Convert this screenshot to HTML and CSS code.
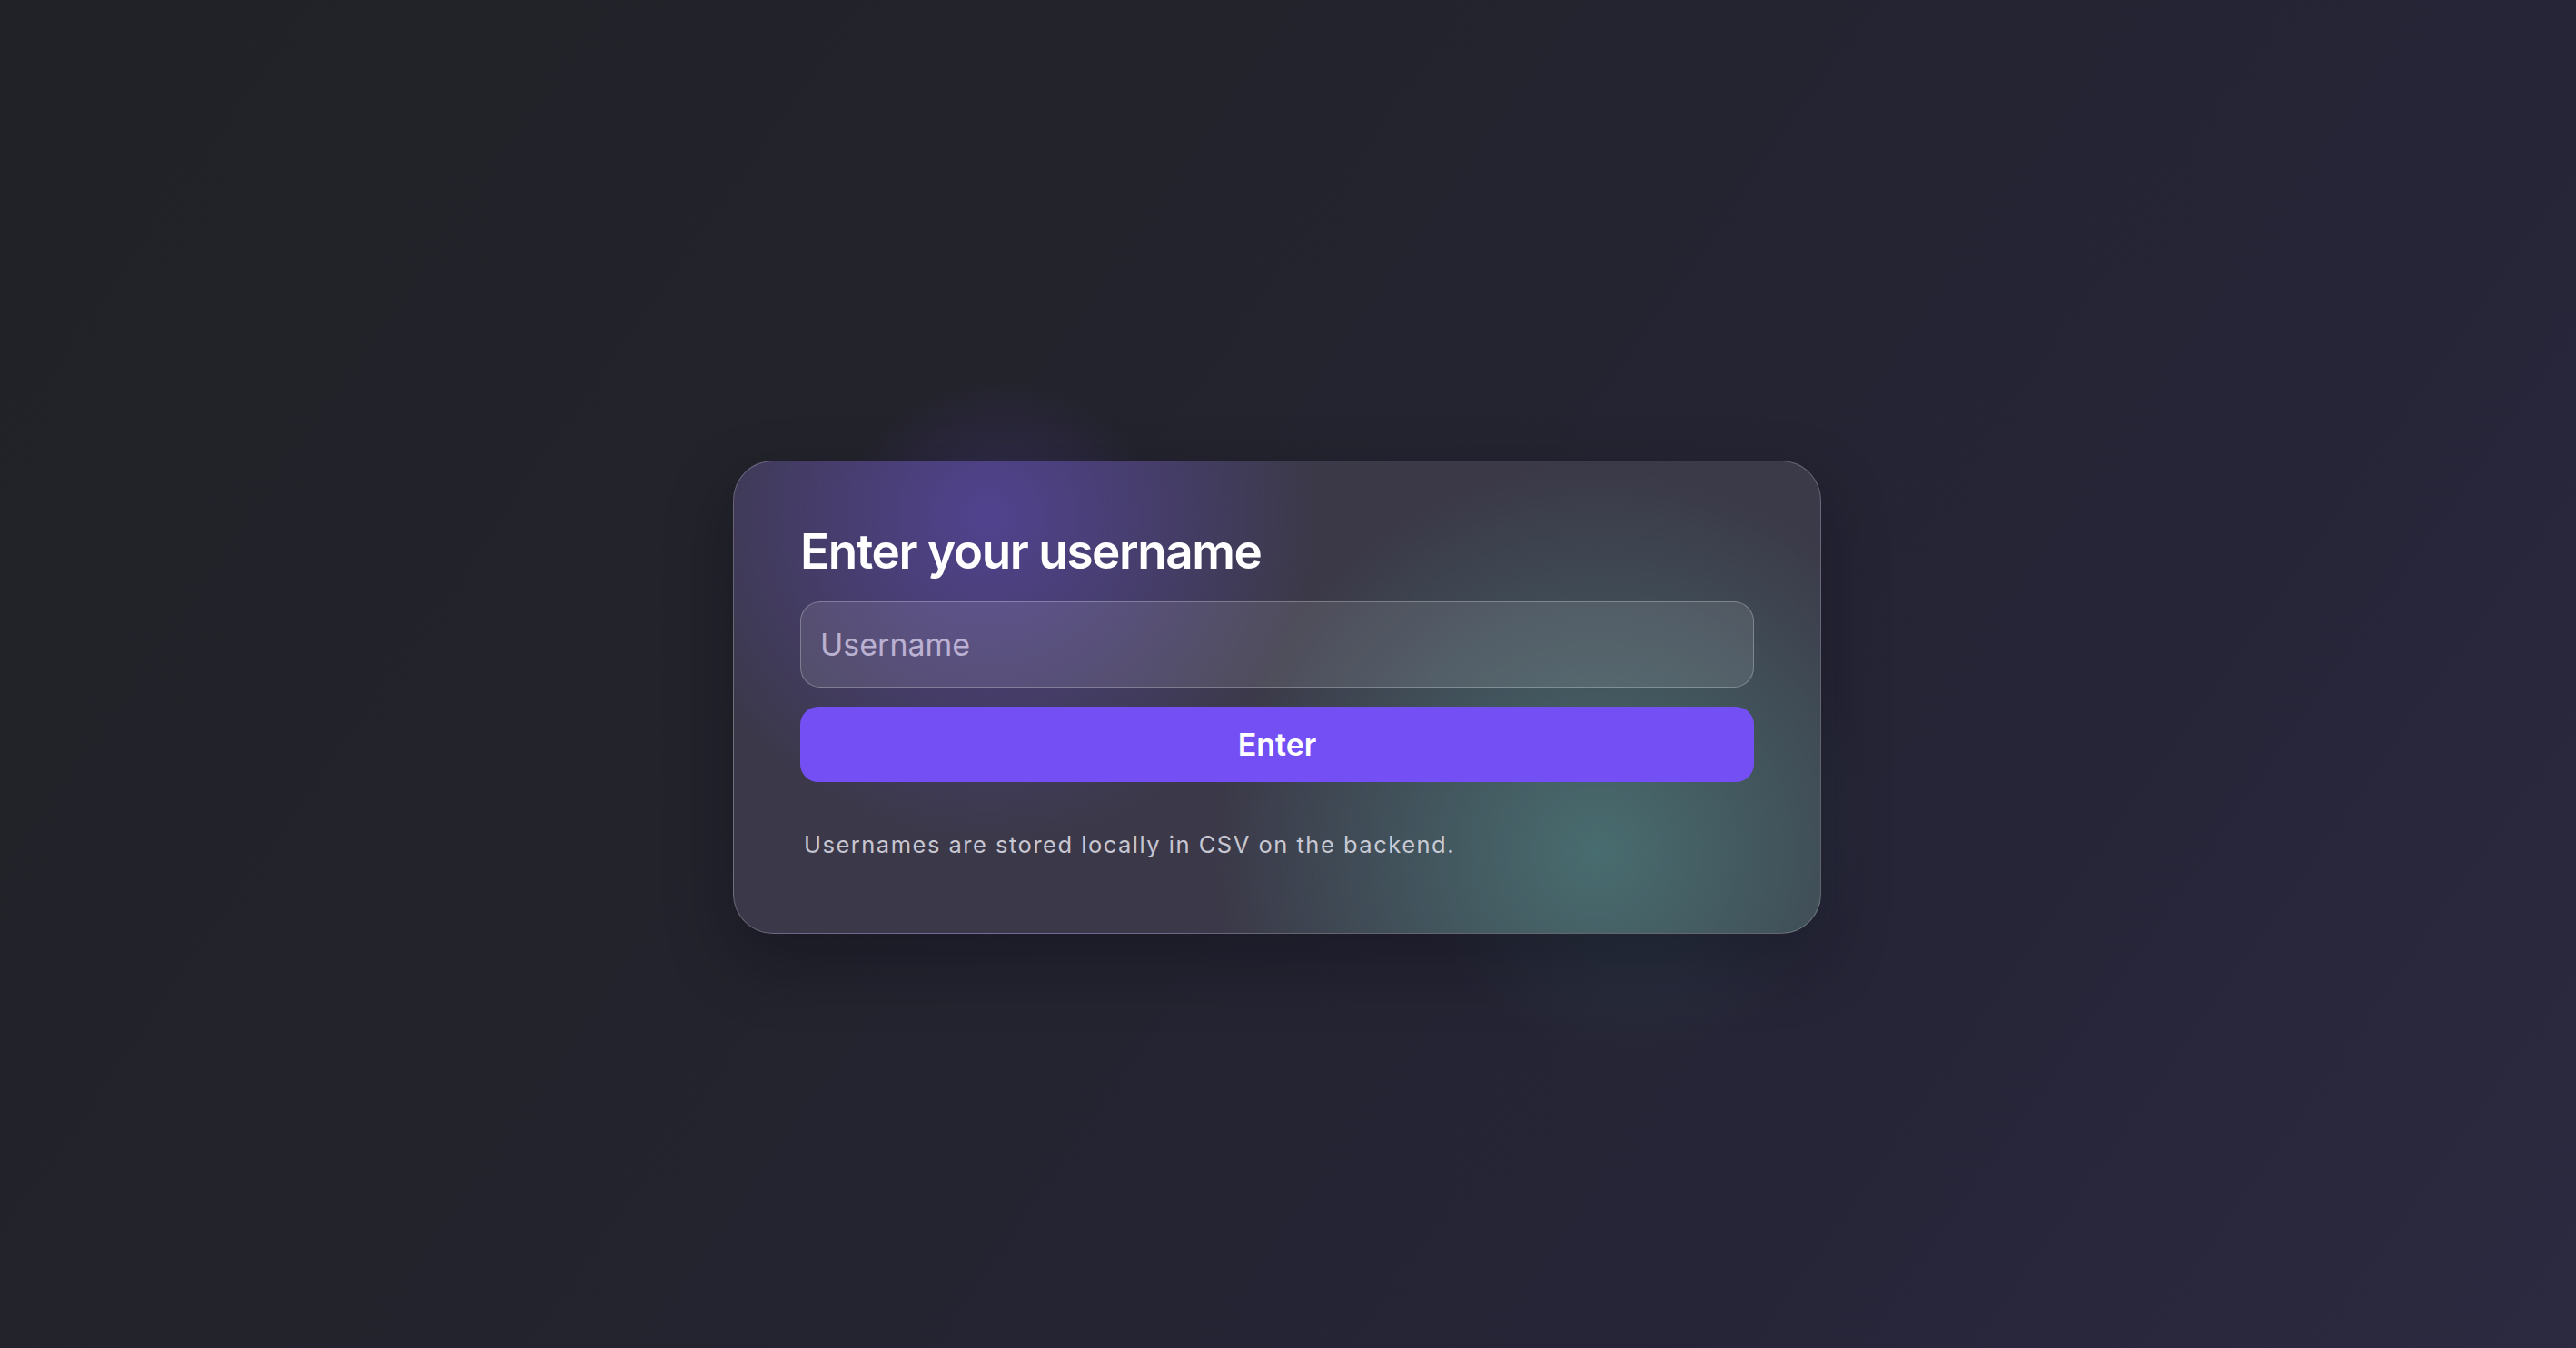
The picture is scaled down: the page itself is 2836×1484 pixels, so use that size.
FILE: index.html
```html
<!DOCTYPE html>
<html lang="en">
<head>
<meta charset="utf-8">
<title>Enter your username</title>
<link rel="stylesheet" href="styles.css">
</head>
<body>
<main class="page">
  <form class="card" onsubmit="return false;">
    <h1 class="title">Enter your username</h1>
    <input class="field" type="text" placeholder="Username">
    <button class="btn" type="submit">Enter</button>
    <p class="note">Usernames are stored locally in CSV on the backend.</p>
  </form>
</main>
</body>
</html>
```

FILE: styles.css
```css
html, body {
  margin: 0;
  padding: 0;
}

body {
  font-family: Inter, "Noto Sans", "Liberation Sans", sans-serif;
  background: #23232b;
}

.page {
  box-sizing: border-box;
  min-height: 100vh;
  padding: 50px 24px 0 0;
  display: flex;
  align-items: center;
  justify-content: center;
  background:
    radial-gradient(circle 190px at 1100px 610px, rgba(112, 80, 220, 0.28), rgba(112, 80, 220, 0) 100%),
    radial-gradient(circle 260px at 1800px 900px, rgba(70, 140, 135, 0.24), rgba(70, 140, 135, 0) 100%),
    linear-gradient(125deg, #212227 0%, #23232c 35%, #262538 75%, #2c2a40 100%);
}

.card {
  box-sizing: border-box;
  width: 1198px;
  height: 521px;
  padding: 67px 73px 0 73px;
  border: 1px solid rgba(255, 255, 255, 0.22);
  border-radius: 44px;
  display: flex;
  flex-direction: column;
  background:
    radial-gradient(circle 360px at 280px 60px, rgba(90, 70, 170, 0.72), rgba(90, 70, 170, 0) 100%),
    radial-gradient(circle 420px at 950px 430px, rgba(75, 120, 120, 0.82), rgba(75, 120, 120, 0) 100%),
    linear-gradient(90deg, #3b3849 0%, #3b3a48 100%);
  box-shadow: 0 30px 70px rgba(10, 10, 20, 0.35);
}

.title {
  margin: 0;
  font-size: 53px;
  line-height: 65px;
  font-weight: 600;
  letter-spacing: -1.4px;
  color: #ffffff;
}

.field {
  box-sizing: border-box;
  margin: 22px 0 0 0;
  width: 100%;
  height: 95px;
  padding: 0 21px;
  border: 1.5px solid rgba(255, 255, 255, 0.26);
  border-radius: 22px;
  background: rgba(255, 255, 255, 0.1);
  font-family: inherit;
  font-size: 34px;
  color: #ffffff;
  outline: none;
}

.field::placeholder {
  color: rgba(225, 215, 245, 0.72);
}

.btn {
  box-sizing: border-box;
  margin: 21px 0 0 0;
  width: 100%;
  height: 83px;
  border: none;
  border-radius: 20px;
  background: #744ff4;
  font-family: inherit;
  font-size: 34px;
  font-weight: 600;
  color: #ffffff;
  cursor: pointer;
}

.note {
  margin: 50px 0 0 4px;
  font-size: 25.5px;
  line-height: 38px;
  letter-spacing: 1.5px;
  color: rgba(225, 225, 235, 0.85);
}
```
